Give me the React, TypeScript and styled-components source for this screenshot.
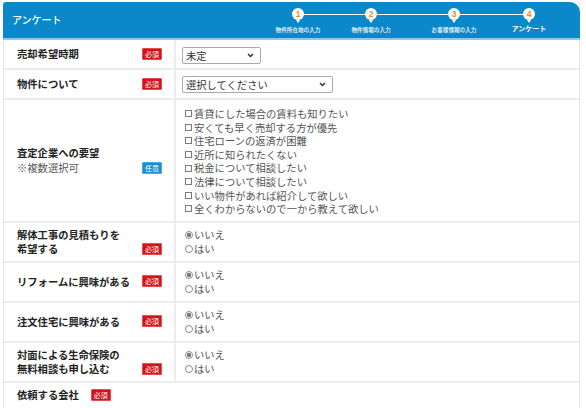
import React from "react";
import styled, { createGlobalStyle } from "styled-components";

const Global = createGlobalStyle`
  html, body { margin: 0; padding: 0; background: #fff; }
  body { font-family: "Noto Sans CJK JP", "Noto Sans", sans-serif; }
`;

const Page = styled.div`
  padding: 2px 6px 0 3px;
  height: 406px;
  overflow: hidden;
`;

const Panel = styled.div`
  border-left: 1px solid #e6e6e6;
  border-right: 1px solid #e6e6e6;
`;

const Header = styled.div`
  height: 36px;
  background: #0b88c9;
  border-radius: 3px 10px 0 0;
  border-bottom: 2px solid #8ccbea;
  display: flex;
  align-items: flex-start;
  padding: 0 16px 0 9px;
  margin-left: -1px;
  margin-right: -1px;
`;

const Title = styled.div`
  color: #fff;
  font-size: 10px;
  font-weight: 500;
  line-height: 36px;
`;

const Stepper = styled.div`
  margin-left: auto;
  display: flex;
`;

const Step = styled.div<{ $w: number; $first?: boolean; $last?: boolean }>`
  position: relative;
  width: ${(p) => p.$w}px;
  display: flex;
  flex-direction: column;
  align-items: center;
  padding-top: 6px;
  &::before {
    content: "";
    position: absolute;
    top: 11.5px;
    left: ${(p) => (p.$first ? "50%" : "0")};
    right: ${(p) => (p.$last ? "50%" : "0")};
    height: 1.5px;
    background: #fff;
  }
`;

const Pin = styled.div`
  position: relative;
  z-index: 1;
  width: 12px;
  height: 12px;
  border-radius: 50%;
  background: #fff;
  color: #f08a1c;
  font-size: 8.5px;
  font-weight: 700;
  line-height: 12px;
  text-align: center;
  font-family: "Liberation Sans", sans-serif;
  &::after {
    content: "";
    position: absolute;
    left: 50%;
    bottom: -3px;
    margin-left: -2px;
    border-left: 2px solid transparent;
    border-right: 2px solid transparent;
    border-top: 3px solid #fff;
  }
`;

const StepLabel = styled.div<{ $big?: boolean }>`
  color: #fff;
  margin-top: ${(p) => (p.$big ? "4px" : "7px")};
  font-size: ${(p) => (p.$big ? "7px" : "5.6px")};
  font-weight: ${(p) => (p.$big ? 700 : 500)};
  line-height: ${(p) => (p.$big ? "9px" : "7px")};
  white-space: nowrap;
`;

const Row = styled.div<{ $full?: boolean }>`
  display: grid;
  grid-template-columns: ${(p) => (p.$full ? "1fr" : "172px 1fr")};
  border-bottom: 2px solid #ededed;
`;

const LeftCell = styled.div`
  display: flex;
  align-items: center;
  padding: 0 12px 0 13px;
  border-right: 2px solid #ededed;
`;

const LabelWrap = styled.div`
  flex: 1;
  display: flex;
  align-items: flex-end;
  justify-content: space-between;
`;

const Label = styled.div<{ $lh?: number }>`
  font-size: 10.3px;
  font-weight: 700;
  color: #222;
  line-height: ${(p) => p.$lh ?? 14}px;
`;

const Note = styled.span`
  font-weight: 400;
  color: #555;
`;

const Badge = styled.span<{ $kind?: "req" | "opt"; $mb?: number }>`
  display: inline-block;
  width: 20px;
  height: 12px;
  box-sizing: border-box;
  border-radius: 1px;
  background: ${(p) => (p.$kind === "opt" ? "#1a90d2" : "#d4121b")};
  border: 1px solid ${(p) => (p.$kind === "opt" ? "#4aa9e0" : "#e84a50")};
  color: #fff;
  font-size: 7px;
  line-height: 10px;
  text-align: center;
  font-weight: 400;
  flex-shrink: 0;
  margin-bottom: ${(p) => p.$mb ?? 0}px;
`;

const RightCell = styled.div<{ $pad: string }>`
  padding: ${(p) => p.$pad};
`;

const Select = styled.div<{ $w: number }>`
  width: ${(p) => p.$w}px;
  height: 17px;
  box-sizing: border-box;
  border: 1px solid #a9a9a9;
  border-radius: 2px;
  display: flex;
  align-items: center;
  justify-content: space-between;
  padding: 0 6px 0 3px;
  font-size: 10.3px;
  color: #333;
`;

const Chevron = () => (
  <svg width="7" height="5" viewBox="0 0 7 5">
    <path d="M1 1 L3.5 3.5 L6 1" fill="none" stroke="#333" strokeWidth="1.5" />
  </svg>
);

const OptionLine = styled.div<{ $lh: number }>`
  display: flex;
  align-items: center;
  font-size: 10.3px;
  color: #555;
  line-height: ${(p) => p.$lh}px;
  white-space: nowrap;
`;

const Box = styled.span`
  width: 7px;
  height: 7px;
  box-sizing: border-box;
  border: 1px solid #7a7a7a;
  margin: 0 2px 0 3px;
  flex-shrink: 0;
`;

const Radio = styled.span<{ $on?: boolean }>`
  width: 8px;
  height: 8px;
  box-sizing: border-box;
  border-radius: 50%;
  border: 1px solid #8a8a8a;
  margin: 0 1px 0 3px;
  flex-shrink: 0;
  background: ${(p) => (p.$on ? "radial-gradient(circle, #777 0 2px, #fff 2.3px)" : "#fff")};
`;

const FullCell = styled.div`
  display: flex;
  align-items: center;
  gap: 12px;
  padding: 5px 13px 9px;
`;

const checks = [
  "賃貸にした場合の賃料も知りたい",
  "安くても早く売却する方が優先",
  "住宅ローンの返済が困難",
  "近所に知られたくない",
  "税金について相談したい",
  "法律について相談したい",
  "いい物件があれば紹介して欲しい",
  "全くわからないので一から教えて欲しい",
];

const radioRows: { label: string[] }[] = [
  { label: ["解体工事の見積もりを", "希望する"] },
  { label: ["リフォームに興味がある"] },
  { label: ["注文住宅に興味がある"] },
  { label: ["対面による生命保険の", "無料相談も申し込む"] },
];

const steps = [
  { n: "1", t: "物件所在地の入力", w: 60 },
  { n: "2", t: "物件情報の入力", w: 86 },
  { n: "3", t: "お客様情報の入力", w: 80 },
  { n: "4", t: "アンケート", w: 70, big: true },
];

export default function App() {
  return (
    <Page>
      <Global />
      <Panel>
        <Header>
          <Title>アンケート</Title>
          <Stepper>
            {steps.map((s, i) => (
              <Step key={s.n} $w={s.w} $first={i === 0} $last={i === steps.length - 1}>
                <Pin>{s.n}</Pin>
                <StepLabel $big={s.big}>{s.t}</StepLabel>
              </Step>
            ))}
          </Stepper>
        </Header>

        <Row>
          <LeftCell>
            <LabelWrap>
              <Label>売却希望時期</Label>
              <Badge $mb={1}>必須</Badge>
            </LabelWrap>
          </LeftCell>
          <RightCell $pad="7px 6px 4px">
            <Select $w={79}>
              <span>未定</span>
              <Chevron />
            </Select>
          </RightCell>
        </Row>

        <Row>
          <LeftCell>
            <LabelWrap>
              <Label>物件について</Label>
              <Badge $mb={1}>必須</Badge>
            </LabelWrap>
          </LeftCell>
          <RightCell $pad="6px 6px 5px">
            <Select $w={151}>
              <span>選択してください</span>
              <Chevron />
            </Select>
          </RightCell>
        </Row>

        <Row>
          <LeftCell>
            <LabelWrap>
              <Label $lh={15}>
                査定企業への要望
                <br />
                <Note>※複数選択可</Note>
              </Label>
              <Badge $kind="opt" $mb={1}>任意</Badge>
            </LabelWrap>
          </LeftCell>
          <RightCell $pad="7px 6px 5px">
            {checks.map((c) => (
              <OptionLine key={c} $lh={13.6}>
                <Box />
                {c}
              </OptionLine>
            ))}
          </RightCell>
        </Row>

        {radioRows.map((r) => (
          <Row key={r.label.join("")}>
            <LeftCell>
              <LabelWrap>
                <Label>
                  {r.label.map((l, i) => (
                    <React.Fragment key={l}>
                      {i > 0 && <br />}
                      {l}
                    </React.Fragment>
                  ))}
                </Label>
                <Badge $mb={r.label.length > 1 ? 1 : 2}>必須</Badge>
              </LabelWrap>
            </LeftCell>
            <RightCell $pad="5px 6px 5px">
              <OptionLine $lh={14}>
                <Radio $on />
                いいえ
              </OptionLine>
              <OptionLine $lh={14}>
                <Radio />
                はい
              </OptionLine>
            </RightCell>
          </Row>
        ))}

        <Row $full>
          <FullCell>
            <Label>依頼する会社</Label>
            <Badge>必須</Badge>
          </FullCell>
        </Row>
      </Panel>
    </Page>
  );
}
